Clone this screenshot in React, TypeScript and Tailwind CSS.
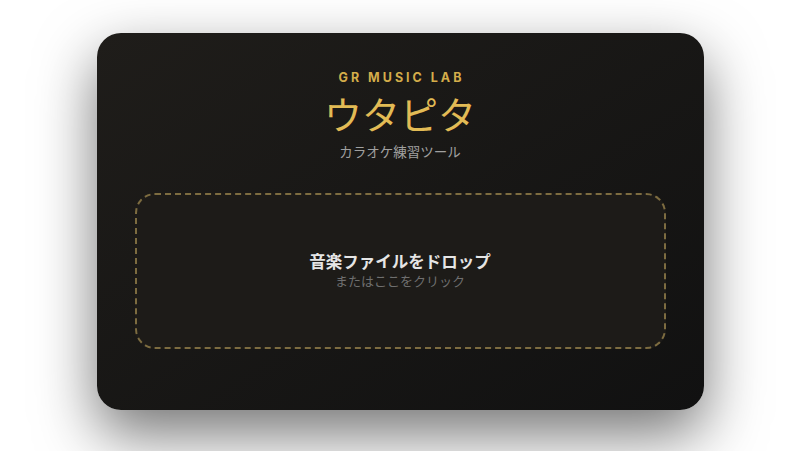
export default function App() {
  return (
    <div className="w-[800px] h-[451px] bg-white flex items-start justify-center pt-[33px] font-['Noto_Sans_CJK_JP','Noto_Sans',sans-serif]">
      <div className="w-[607px] h-[377px] rounded-[24px] bg-gradient-to-br from-[#1f1d1a] to-[#111111] shadow-[0_24px_60px_rgba(0,0,0,0.55)] px-[38px] pt-[38px] flex flex-col">
        {/* ヘッダー */}
        <div className="flex flex-col items-center">
          <div className="text-[12.5px] leading-[14px] font-bold tracking-[0.24em] pl-[0.24em] text-[#d4ad4a] font-['Inter','Noto_Sans',sans-serif]">
            GR MUSIC LAB
          </div>
          <h1 className="mt-[4px] text-[38px] leading-[48px] font-normal text-[#e2bb55]">ウタピタ</h1>
          <p className="mt-[4px] text-[13.5px] leading-[20px] text-[#a0a0a0]">カラオケ練習ツール</p>
        </div>

        {/* ドロップエリア */}
        <div className="mt-[32px] h-[156px] rounded-[20px] border-2 border-dashed border-[#7d6c40] bg-[#1d1b18] flex flex-col items-center justify-center cursor-pointer">
          <div className="text-[16.5px] leading-[22px] font-semibold text-[#e5e5e5]">音楽ファイルをドロップ</div>
          <div className="mb-[2px] text-[13px] leading-[18px] text-[#6f6f6f]">またはここをクリック</div>
        </div>
      </div>
    </div>
  );
}
